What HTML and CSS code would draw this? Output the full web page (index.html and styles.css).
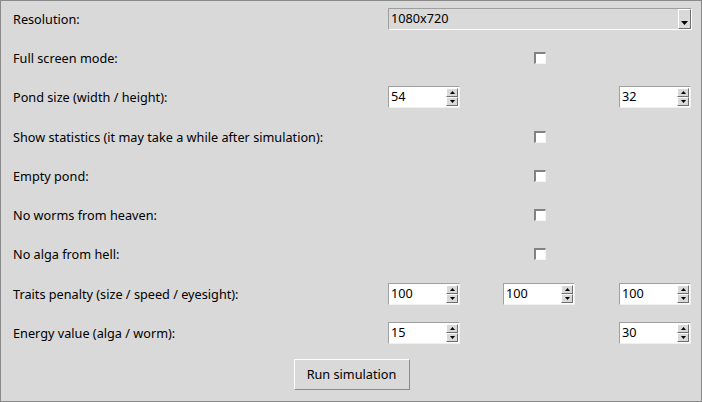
FILE: index.html
```html
<!DOCTYPE html>
<html>
<head>
<meta charset="utf-8">
<link rel="stylesheet" href="styles.css">
</head>
<body>
<div class="window">
  <div class="form">
    <div class="label r1">Resolution:</div>
    <div class="combo r1 span3">
      <span class="combo-text">1080x720</span>
      <span class="combo-btn"><svg width="7" height="4" viewBox="0 0 7 4"><path d="M0 0H7L3.5 4Z" fill="#000"/></svg></span>
    </div>

    <div class="label">Full screen mode:</div>
    <div class="span3 center"><span class="check"></span></div>

    <div class="label">Pond size (width / height):</div>
    <div class="spin c2"><span class="val">54</span><span class="arrows"><span class="ab"><svg width="5" height="3" viewBox="0 0 5 3"><path d="M2.5 0L5 3H0Z"/></svg></span><span class="ab"><svg width="5" height="3" viewBox="0 0 5 3"><path d="M0 0H5L2.5 3Z"/></svg></span></span></div>
    <div class="spin c6"><span class="val">32</span><span class="arrows"><span class="ab"><svg width="5" height="3" viewBox="0 0 5 3"><path d="M2.5 0L5 3H0Z"/></svg></span><span class="ab"><svg width="5" height="3" viewBox="0 0 5 3"><path d="M0 0H5L2.5 3Z"/></svg></span></span></div>

    <div class="label">Show statistics (it may take a while after simulation):</div>
    <div class="span3 center"><span class="check"></span></div>

    <div class="label">Empty pond:</div>
    <div class="span3 center"><span class="check"></span></div>

    <div class="label">No worms from heaven:</div>
    <div class="span3 center"><span class="check"></span></div>

    <div class="label">No alga from hell:</div>
    <div class="span3 center"><span class="check"></span></div>

    <div class="label">Traits penalty (size / speed / eyesight):</div>
    <div class="spin c2"><span class="val">100</span><span class="arrows"><span class="ab"><svg width="5" height="3" viewBox="0 0 5 3"><path d="M2.5 0L5 3H0Z"/></svg></span><span class="ab"><svg width="5" height="3" viewBox="0 0 5 3"><path d="M0 0H5L2.5 3Z"/></svg></span></span></div>
    <div class="spin c4"><span class="val">100</span><span class="arrows"><span class="ab"><svg width="5" height="3" viewBox="0 0 5 3"><path d="M2.5 0L5 3H0Z"/></svg></span><span class="ab"><svg width="5" height="3" viewBox="0 0 5 3"><path d="M0 0H5L2.5 3Z"/></svg></span></span></div>
    <div class="spin c6"><span class="val">100</span><span class="arrows"><span class="ab"><svg width="5" height="3" viewBox="0 0 5 3"><path d="M2.5 0L5 3H0Z"/></svg></span><span class="ab"><svg width="5" height="3" viewBox="0 0 5 3"><path d="M0 0H5L2.5 3Z"/></svg></span></span></div>

    <div class="label">Energy value (alga / worm):</div>
    <div class="spin c2"><span class="val">15</span><span class="arrows"><span class="ab"><svg width="5" height="3" viewBox="0 0 5 3"><path d="M2.5 0L5 3H0Z"/></svg></span><span class="ab"><svg width="5" height="3" viewBox="0 0 5 3"><path d="M0 0H5L2.5 3Z"/></svg></span></span></div>
    <div class="spin c6"><span class="val">30</span><span class="arrows"><span class="ab"><svg width="5" height="3" viewBox="0 0 5 3"><path d="M2.5 0L5 3H0Z"/></svg></span><span class="ab"><svg width="5" height="3" viewBox="0 0 5 3"><path d="M0 0H5L2.5 3Z"/></svg></span></span></div>
  </div>
  <div class="actions">
    <button class="btn">Run simulation</button>
  </div>
</div>
</body>
</html>
```
FILE: styles.css
```css
html, body {
  margin: 0;
  padding: 0;
  background: #d9d9d9;
}
.window {
  width: 702px;
  height: 402px;
  box-sizing: border-box;
  border: 1px solid #8a8a8a;
  background: #d9d9d9;
  font-family: "Noto Sans", "DejaVu Sans", sans-serif;
  font-size: 12.7px;
  color: #000;
  display: flex;
  flex-direction: column;
}
.form {
  display: grid;
  grid-template-columns: 375px 72px 43px 72px 44px 72px;
  grid-auto-rows: 39.3px;
  padding-left: 12px;
  margin-top: -2px;
  align-items: center;
}
.label {
  grid-column: 1;
  line-height: 16px;
  white-space: nowrap;
}
.span3 { grid-column: 2 / 7; }
.center { display: flex; justify-content: center; }
.c2 { grid-column: 2; }
.c4 { grid-column: 4; }
.c6 { grid-column: 6; }

.combo {
  height: 22px;
  box-sizing: border-box;
  margin-right: -1px;
  border: 1px solid;
  border-color: #9e9e9e #ffffff #ffffff #9e9e9e;
  display: flex;
  align-items: stretch;
}
.combo-text {
  flex: 1;
  padding-left: 2px;
  line-height: 19px;
}
.combo-btn {
  width: 13px;
  box-sizing: border-box;
  border: 1px solid;
  border-color: #ffffff #6e6e6e #6e6e6e #ffffff;
  background: #d9d9d9;
  display: flex;
  align-items: flex-end;
  justify-content: center;
  padding-bottom: 3px;
}
.check {
  width: 12px;
  height: 12px;
  box-sizing: border-box;
  background: #fff;
  border-top: 2px solid #828282;
  border-left: 2px solid #828282;
  border-right: 1px solid #f4f4f4;
  border-bottom: 1px solid #f4f4f4;
  margin-left: 1px;
}
.spin {
  height: 22px;
  box-sizing: border-box;
  background: #fff;
  border: 1px solid;
  border-color: #a0a0a0 #f0f0f0 #f0f0f0 #a0a0a0;
  display: flex;
  align-items: stretch;
}
.spin .val {
  flex: 1;
  padding-left: 2px;
  line-height: 19px;
}
.arrows {
  width: 12px;
  margin: 1px 1px 1px 0;
  display: flex;
  flex-direction: column;
}
.ab {
  flex: 1;
  box-sizing: border-box;
  background: #d9d9d9;
  border: 1px solid;
  border-color: #ffffff #6e6e6e #6e6e6e #ffffff;
  display: flex;
  align-items: center;
  justify-content: center;
}
.ab svg { fill: #000; display: block; }
.actions {
  display: flex;
  justify-content: center;
  padding-top: 6px;
}
.btn {
  width: 116px;
  height: 31px;
  margin-left: 1px;
  box-sizing: border-box;
  background: #d9d9d9;
  border: 1px solid;
  border-color: #ffffff #8a8a8a #8a8a8a #ffffff;
  font-family: "Noto Sans", "DejaVu Sans", sans-serif;
  font-size: 12.7px;
  color: #000;
  padding: 0;
}
```
